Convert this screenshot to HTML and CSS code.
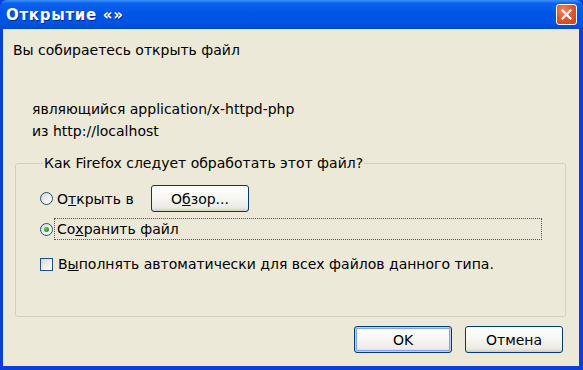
FILE: index.html
```html
<!DOCTYPE html>
<html lang="ru">
<head>
    <meta charset="UTF-8">
    <title>Открытие «»</title>
    <link rel="stylesheet" href="styles.css">
</head>
<body>
    <div class="window">
        <div class="titlebar">
            <span class="title">Открытие «»</span>
            <button class="close" title="Закрыть">
                <svg width="11" height="11" viewBox="0 0 11 11">
                    <path d="M1.5 1.5 L9.5 9.5 M9.5 1.5 L1.5 9.5" stroke="#fff" stroke-width="2.2" stroke-linecap="square"/>
                </svg>
            </button>
        </div>
        <div class="content">
            <p class="intro">Вы собираетесь открыть файл</p>
            <div class="file-info">
                <p>являющийся application/x-httpd-php</p>
                <p>из http://localhost</p>
            </div>
            <fieldset class="group">
                <legend>Как Firefox следует обработать этот файл?</legend>
                <div class="option-row">
                    <span class="radio"></span>
                    <span class="option-label open-label">О<u>т</u>крыть в</span>
                    <button class="btn">О<u>б</u>зор...</button>
                </div>
                <div class="option-row">
                    <span class="radio checked"></span>
                    <span class="option-label focused">Со<u>х</u>ранить файл</span>
                </div>
                <div class="option-row check-row">
                    <span class="checkbox"></span>
                    <span class="option-label">В<u>ы</u>полнять автоматически для всех файлов данного типа.</span>
                </div>
            </fieldset>
            <div class="actions">
                <button class="btn default">OK</button>
                <button class="btn">Отмена</button>
            </div>
        </div>
    </div>
</body>
</html>
```

FILE: styles.css
```css
html, body {
    margin: 0;
    height: 100%;
}
body {
    font-family: "DejaVu Sans", Verdana, sans-serif;
    font-size: 14px;
    color: #000;
    background-color: #0b3ed6;
}
.window {
    height: 370px;
    display: flex;
    flex-direction: column;
    background-color: #0a3fd8;
    border-radius: 7px 7px 0 0;
    overflow: hidden;
}
.titlebar {
    height: 29px;
    flex: none;
    display: flex;
    align-items: center;
    justify-content: space-between;
    padding: 0 5px 0 6px;
    background: linear-gradient(to bottom, #3d8ff8 0%, #0a62ec 12%, #0055e6 45%, #0053e2 80%, #0049d0 100%);
}
.title {
    font-weight: bold;
    font-size: 15px;
    color: #fff;
    text-shadow: 1px 1px 0 #0a2a8c;
    letter-spacing: 0.7px;
}
.close {
    width: 21px;
    height: 21px;
    padding: 0;
    margin-right: 1px;
    display: flex;
    align-items: center;
    justify-content: center;
    border: 1px solid #fff;
    border-radius: 3px;
    background: radial-gradient(circle at 35% 30%, #f08a68 0%, #e0582f 45%, #c8401c 100%);
}
.content {
    flex: 1;
    margin: 0 4px 4px 3px;
    padding-top: 10px;
    background-color: #ece9d8;
    line-height: 22px;
}
p {
    margin: 0;
}
.intro {
    padding-left: 10px;
}
.file-info {
    margin-top: 37px;
    padding-left: 29px;
}
.group {
    margin: 10px 13px 0 12px;
    padding: 11px 23px 41px 24px;
    border: 1px solid #d0d0bf;
    border-radius: 3px;
}
.group legend {
    padding: 0 1px;
    margin-left: 3px;
    line-height: 22px;
}
.option-row {
    display: flex;
    align-items: center;
    min-height: 22px;
}
.option-row + .option-row {
    margin-top: 6px;
}
.option-row.check-row {
    margin-top: 13px;
}
.radio, .checkbox {
    flex: none;
    width: 13px;
    height: 13px;
    box-sizing: border-box;
    border: 1px solid #1c5180;
    background: linear-gradient(135deg, #d6d5cc 0%, #f0f0ea 55%, #ffffff 100%);
}
.radio {
    border-radius: 50%;
    display: flex;
    align-items: center;
    justify-content: center;
}
.radio.checked::after {
    content: "";
    width: 5px;
    height: 5px;
    border-radius: 50%;
    background: radial-gradient(circle at 35% 35%, #5ed35e 0%, #21a121 60%, #178017 100%);
}
.option-label {
    padding: 0 3px;
    margin-left: 1px;
}
.checkbox + .option-label {
    margin-left: 2px;
}
.open-label {
    width: 91px;
}
.focused {
    flex: 1;
    outline: 1px dotted #555;
    outline-offset: -1px;
    height: 22px;
}
.btn {
    width: 98px;
    height: 27px;
    padding: 0;
    font-family: inherit;
    font-size: 14px;
    color: #000;
    border: 1px solid #003c74;
    border-radius: 3px;
    background: linear-gradient(to bottom, #ffffff 0%, #f6f6f2 50%, #ecebe5 85%, #d6d0c5 100%);
    box-shadow: inset 0 -1px 0 #d8d2bd;
}
.btn.default {
    box-shadow: inset 0 0 0 1px #b9d1fa, inset 0 0 0 2px #7fa4ea;
}
.actions {
    display: flex;
    justify-content: flex-end;
    gap: 13px;
    margin: 9px 16px 0 0;
}
```
